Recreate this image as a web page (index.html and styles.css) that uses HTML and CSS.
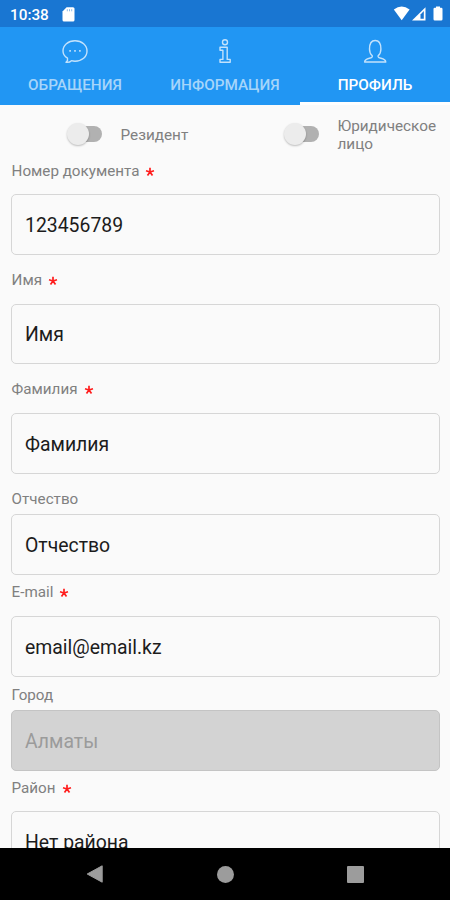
FILE: index.html
```html
<!DOCTYPE html>
<html lang="ru">
<head>
  <meta charset="UTF-8">
  <title>Профиль</title>
  <link rel="stylesheet" href="styles.css">
</head>
<body>
  <svg class="hidden">
    <symbol id="star" viewBox="0 0 10 10">
      <path d="M5 5V0.8M5 5L9 3.8M5 5L7.5 8.6M5 5L2.5 8.6M5 5L1 3.8" fill="none" stroke="#ff1d1d" stroke-width="1.7"/>
    </symbol>
  </svg>

  <div class="status-bar">
    <span class="time">10:38</span>
    <svg class="sd-card" width="13" height="15" viewBox="0 0 13 15">
      <path d="M4.6 0.3H11Q12.5 0.3 12.5 1.8V13Q12.5 14.5 11 14.5H2Q0.5 14.5 0.5 13V4.5Z" fill="#fff"/>
      <path d="M5.3 2.2V4.3M7.5 2.2V4.3M9.7 2.2V4.3" stroke="#8fbce8" stroke-width="1"/>
    </svg>
    <svg class="status-icons" width="50" height="16" viewBox="0 0 50 16">
      <path d="M0.8 3.6Q8.7 -2.6 16.6 3.6L8.7 14.2Z" fill="#fff"/>
      <path d="M32.5 1.2V14.5H19Z" fill="#fff"/>
      <path d="M30.8 5V12.8H27.5V8.6Z" fill="#1976d2"/>
      <path d="M43 1.7V0.5H47V1.7H48.2Q49.5 1.7 49.5 3V13.3Q49.5 14.6 48.2 14.6H41.8Q40.5 14.6 40.5 13.3V3Q40.5 1.7 41.8 1.7Z" fill="#fff"/>
    </svg>
  </div>

  <div class="tabs">
    <div class="tab">
      <svg width="28" height="28" viewBox="0 0 28 28">
        <path d="M5 25.3Q7.2 23.5 6.5 21.2C3.5 19.5 2 17 2 14C2 8.2 7 3.7 14 3.7S26 8.2 26 14S21 24.2 14 24.2Q12 24.2 10.5 23.7Q8.5 25.8 5 25.3Z"/>
        <path d="M8.3 13.8h1.6M13.2 13.8h1.6M18.1 13.8h1.6" stroke-width="1.8"/>
      </svg>
      <span>ОБРАЩЕНИЯ</span>
    </div>
    <div class="tab">
      <svg width="28" height="28" viewBox="0 0 28 28">
        <circle cx="14" cy="5.3" r="2.5"/>
        <path d="M9 10.3H16.2V22.4H19.2V25.3H9V22.4H11.9V13.2H9Z"/>
      </svg>
      <span>ИНФОРМАЦИЯ</span>
    </div>
    <div class="tab active">
      <svg width="28" height="28" viewBox="0 0 28 28">
        <path d="M11.3 18.8C9.3 17.2 8.5 14.5 8.5 12C8.5 7 10.3 3.5 14.2 3.5S19.9 7 19.9 12C19.9 14.5 19.1 17.2 17.1 18.8C16.7 20.2 18 20.8 20 21.3C23 22 24.5 22.5 24.8 25H3.6C3.9 22.5 5.4 22 8.4 21.3C10.4 20.8 11.7 20.2 11.3 18.8Z"/>
      </svg>
      <span>ПРОФИЛЬ</span>
    </div>
  </div>

  <div class="content">
    <div class="switches">
      <div class="switch-item">
        <div class="switch"><div class="thumb"></div></div>
        <span>Резидент</span>
      </div>
      <div class="switch-item">
        <div class="switch"><div class="thumb"></div></div>
        <span>Юридическое<br>лицо</span>
      </div>
    </div>

    <div class="field">
      <label>Номер документа <svg class="star"><use href="#star"/></svg></label>
      <div class="input">123456789</div>
    </div>
    <div class="field">
      <label>Имя <svg class="star"><use href="#star"/></svg></label>
      <div class="input">Имя</div>
    </div>
    <div class="field">
      <label>Фамилия <svg class="star"><use href="#star"/></svg></label>
      <div class="input">Фамилия</div>
    </div>
    <div class="field short">
      <label>Отчество</label>
      <div class="input">Отчество</div>
    </div>
    <div class="field email">
      <label>E-mail <svg class="star"><use href="#star"/></svg></label>
      <div class="input">email@email.kz</div>
    </div>
    <div class="field short">
      <label>Город</label>
      <div class="input disabled">Алматы</div>
    </div>
    <div class="field">
      <label>Район <svg class="star"><use href="#star"/></svg></label>
      <div class="input">Нет района</div>
    </div>
  </div>

  <div class="nav-bar">
    <svg width="18" height="20" viewBox="0 0 18 20"><path d="M16.2 1.8V18.2L1.2 10Z" fill="#9c9c9c" stroke="#9c9c9c" stroke-linejoin="round"/></svg>
    <div class="nav-home"></div>
    <div class="nav-recent"></div>
  </div>
</body>
</html>
```
FILE: styles.css
```css
body {
  margin: 0;
  width: 450px;
  height: 900px;
  display: flex;
  flex-direction: column;
  overflow: hidden;
  background: #fafafa;
  font-family: Roboto, sans-serif;
}

.hidden {
  display: none;
}

.status-bar {
  height: 27px;
  flex: none;
  display: flex;
  align-items: center;
  box-sizing: border-box;
  padding: 1px 7px 0 10px;
  background: #1976d2;
  color: #fff;
}

.time {
  width: 52px;
  padding-top: 1px;
  font-size: 15.3px;
  font-weight: 500;
}

.status-icons {
  margin-left: auto;
}

.tabs {
  height: 78px;
  flex: none;
  display: flex;
  background: #2196f3;
}

.tab {
  flex: 1;
  display: flex;
  flex-direction: column;
  align-items: center;
  box-sizing: border-box;
  padding-top: 10px;
  border-bottom: 3px solid #2196f3;
  color: #a6d5fa;
  font-size: 15.3px;
  font-weight: 500;
  line-height: 20px;
}

.tab svg {
  fill: none;
  stroke: #c3e2fc;
  stroke-width: 1.4;
  stroke-linejoin: round;
}

.tab span {
  margin-top: 10px;
}

.tab.active {
  color: #fff;
  border-color: #fff;
}

.content {
  flex: 1;
  min-height: 0;
  overflow: hidden;
  padding: 0 10px 0 11px;
}

.switches {
  display: flex;
  height: 57px;
  color: #808080;
  font-size: 15.3px;
  line-height: 18px;
}

.switch-item {
  flex: none;
  width: 217px;
  display: flex;
  align-items: center;
}

.switch-item span {
  padding-top: 2px;
}

.switch {
  width: 35px;
  height: 16px;
  margin: 0 18.5px 0 56px;
  display: flex;
  align-items: center;
  border-radius: 8px;
  background: linear-gradient(90deg, transparent 12px, #b1b1b1 12px);
}

.thumb {
  width: 22px;
  height: 22px;
  border-radius: 50%;
  background: #ececec;
  box-shadow: 0 1px 2px rgba(0,0,0,0.25);
}

.field {
  margin-bottom: 16px;
}

label {
  display: flex;
  align-items: center;
  gap: 6px;
  height: 18px;
  margin-bottom: 14.4px;
  padding-left: 0.6px;
  color: #808080;
  font-size: 15.2px;
}

.star {
  width: 10px;
  height: 10px;
  margin-top: 2px;
}

.input {
  height: 60.8px;
  box-sizing: border-box;
  display: flex;
  align-items: center;
  padding: 2px 0 0 13px;
  border: 1.4px solid #d6d6d6;
  border-radius: 5px;
  color: #1c1c1c;
  font-size: 19.4px;
}

.input.disabled {
  background: #d3d3d3;
  border-color: #c4c4c4;
  color: #9b9b9b;
}

.field.short {
  margin-bottom: 8px;
}

.field.short label {
  margin-bottom: 6.2px;
}

.field.email {
  margin-bottom: 8.5px;
}

.field.email label {
  margin-bottom: 15.8px;
}

.nav-bar {
  height: 52px;
  flex: none;
  display: flex;
  align-items: center;
  justify-content: center;
  gap: 113px;
  background: #000;
}

.nav-home {
  width: 17px;
  height: 17px;
  border-radius: 50%;
  background: #9c9c9c;
}

.nav-recent {
  width: 17px;
  height: 17px;
  border-radius: 1px;
  background: #9c9c9c;
}
```
